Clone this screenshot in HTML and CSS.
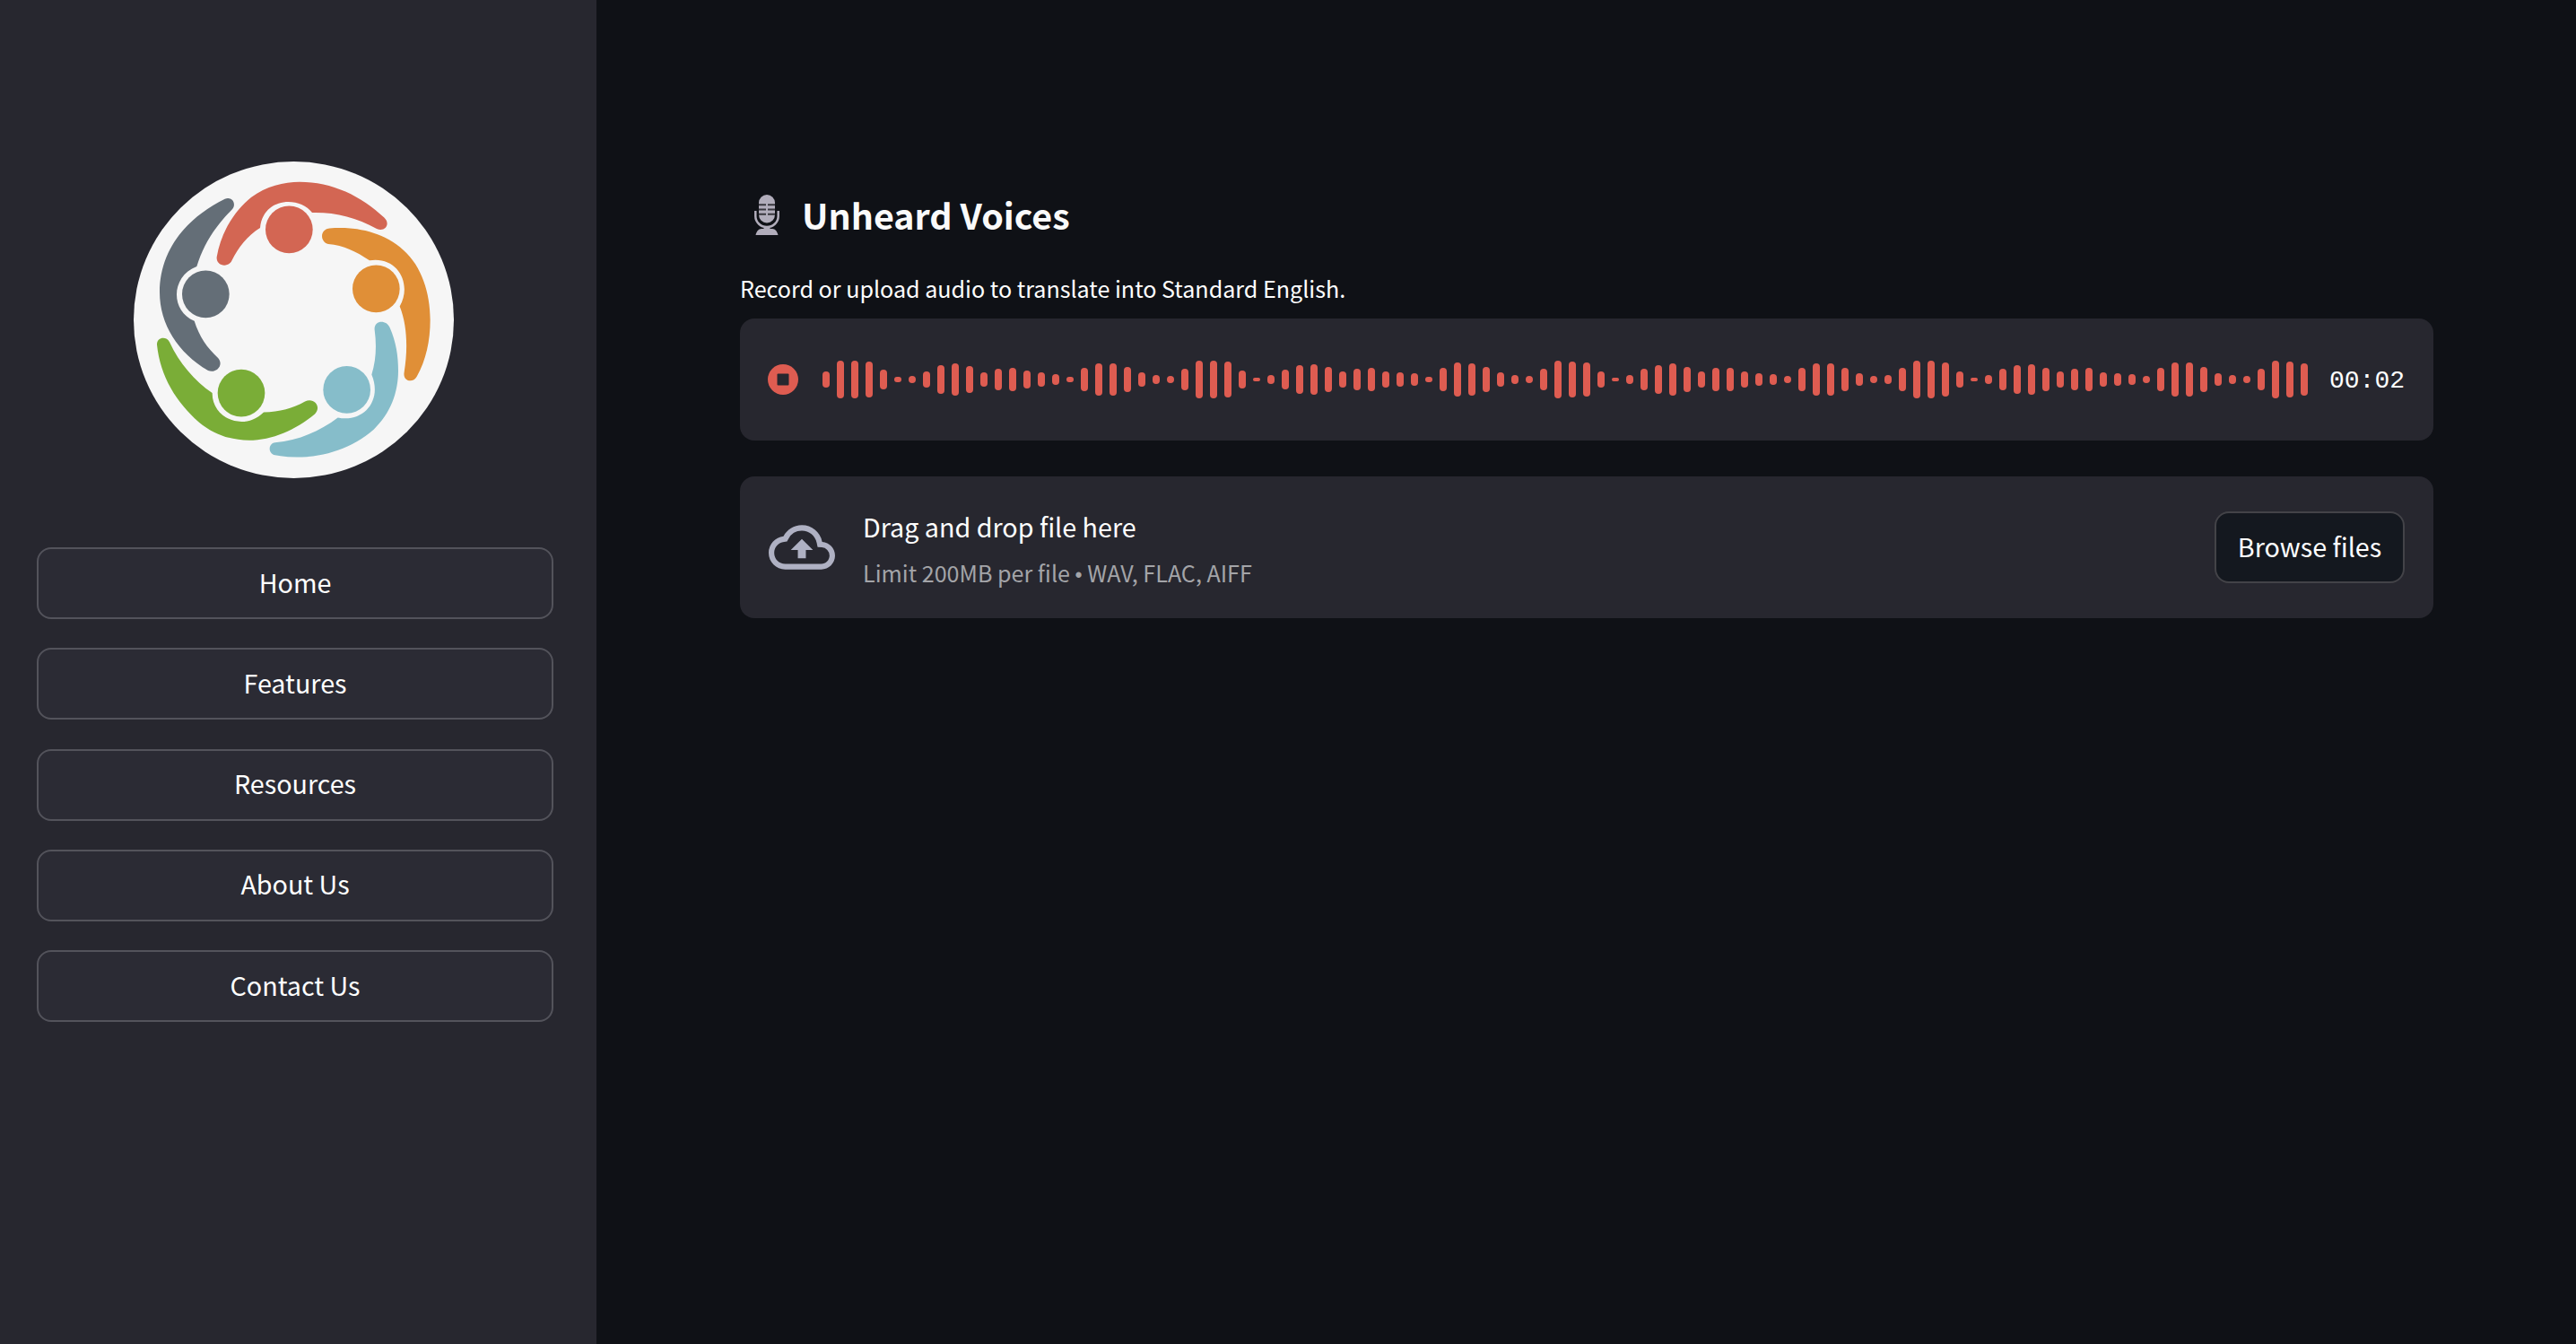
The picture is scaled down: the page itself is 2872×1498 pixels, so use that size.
FILE: index.html
```
<!DOCTYPE html>
<html lang="en">
<head>
    <meta charset="UTF-8">
    <meta name="viewport" content="width=device-width, initial-scale=1.0">
    <title>Unheard Voices</title>
    <link rel="stylesheet" href="styles.css">
</head>
<body>
    <aside class="sidebar">
        <svg class="logo" viewBox="57 60 1071 1060" preserveAspectRatio="none">
            <ellipse cx="592.5" cy="590" rx="535.5" ry="530" fill="#f6f6f6"/>
            <!-- red -->
            <path fill="#d36653" d="M335 380C350 290 400 220 450 180C500 142 560 128 612 128C720 128 820 175 895 248C918 270 897 297 870 285C800 246 730 229 654 231C610 175 490 180 480 282C437 309 406 350 386 390C374 418 332 410 335 380Z"/>
            <circle cx="577" cy="288" r="79" fill="#d36653"/>
            <!-- orange -->
            <path fill="#e08f37" d="M712 284C800 277 890 295 960 357C1020 410 1049 500 1049 590C1049 660 1035 725 1004 780C991 804 956 795 962 765C974 690 973 610 947 545C990 470 940 376 846 391C800 360 760 341 708 336C679 329 680 287 712 284Z"/>
            <circle cx="868" cy="486" r="79" fill="#e08f37"/>
            <!-- light blue -->
            <path fill="#86bdca" d="M863 624C859 591 902 587 914 616C935 665 942 710 942 760C942 835 915 905 860 957C770 1034 650 1064 530 1043C505 1037 507 1004 530 1001C610 993 680 962 740 917C825 935 890 860 853 773C868 725 870 675 863 624Z"/>
            <circle cx="770" cy="824" r="79" fill="#86bdca"/>
            <!-- green -->
            <path fill="#7aad37" d="M135 673C134 647 167 643 177 664C210 735 260 793 320 835C319 920 425 965 492 899C545 898 590 886 630 863C660 848 687 880 663 905C600 958 520 993 443 993C380 993 325 973 275 932C200 865 146 780 135 673Z"/>
            <circle cx="417" cy="835" r="79" fill="#7aad37"/>
            <!-- grey -->
            <path fill="#646e77" d="M362 185C388 176 402 203 386 221C330 277 292 335 268 411C180 445 180 560 260 594C276 645 303 685 340 718C359 741 335 770 306 760C205 700 144 605 144 497C144 360 230 250 362 185Z"/>
            <circle cx="298" cy="504" r="79" fill="#646e77"/>
        </svg>

        <nav class="menu">
            <button class="menu-btn">Home</button>
            <button class="menu-btn">Features</button>
            <button class="menu-btn">Resources</button>
            <button class="menu-btn">About Us</button>
            <button class="menu-btn">Contact Us</button>
        </nav>
    </aside>

    <main class="content">
        <h1 class="title">
            <svg class="mic" viewBox="0 0 28 46">
                <path fill="#b1adbb" d="M5 9a9 9 0 0 1 18 0v13.500a9 9 0 0 1-18 0z"/>
                <path d="M5 11.300h8M15 11.300h8M5 16.500h8M15 16.500h8M5 21.700h8M15 21.700h8" stroke="#38373e" stroke-width="2"/>
                <path d="M1.300 18v6a12.700 12 0 0 0 25.400 0v-6" fill="none" stroke="#b1adbb" stroke-width="2.500"/>
                <path fill="#b1adbb" d="M10.500 36h7v2H20c3.500 0 5.500 3 6.500 7h-25c1-4 3-7 6.500-7h2.500z"/>
            </svg>
            <span class="title-text">Unheard Voices</span>
        </h1>
        <p class="subtitle">Record or upload audio to translate into Standard English.</p>

        <section class="recorder">
            <svg class="stop" viewBox="0 0 34 34">
                <circle cx="17" cy="17" r="17" fill="#de5c51"/>
                <rect x="10.500" y="10.500" width="13" height="13" rx="1" fill="#27272f"/>
            </svg>
            <div class="wave" id="wave"></div>
            <span class="timer">00:02</span>
        </section>

        <section class="uploader">
            <svg class="cloud" viewBox="0 0 24 24">
                <path d="M19.350 10.040A7.490 7.490 0 0 0 12 4C9.110 4 6.600 5.640 5.350 8.040A5.994 5.994 0 0 0 0 14c0 3.310 2.690 6 6 6h13c2.760 0 5-2.240 5-5 0-2.640-2.050-4.780-4.650-4.960zM19 18H6c-2.210 0-4-1.790-4-4 0-2.050 1.530-3.760 3.560-3.970l1.070-.11.5-.95A5.469 5.469 0 0 1 12 6c2.620 0 4.880 1.860 5.390 4.430l.3 1.500 1.530.11A2.980 2.980 0 0 1 22 15c0 1.650-1.350 3-3 3zM8 13h2.550v3h2.900v-3H16l-4-4z"/>
            </svg>
            <div class="hint">
                <span class="hint-main">Drag and drop file here</span>
                <span class="hint-limit">Limit 200MB per file <span class="dot">•</span> WAV, FLAC, AIFF</span>
            </div>
            <button class="browse">Browse files</button>
        </section>
    </main>

    <script>
        const levels = [
            18, 42, 42, 40, 22, 6, 8, 18, 32, 36, 30, 16, 24, 26, 20, 16, 12, 6, 26, 36, 36, 28, 16, 10, 8,
            24, 42, 42, 40, 20, 4, 10, 22, 32, 34, 28, 18, 24, 26, 18, 16, 14, 6, 26, 38, 36, 28, 16, 10, 8,
            24, 42, 40, 38, 18, 4, 10, 24, 32, 36, 28, 18, 26, 26, 18, 14, 12, 8, 26, 36, 36, 26, 14, 8, 10,
            26, 42, 42, 38, 18, 4, 10, 24, 32, 34, 26, 18, 24, 26, 16, 14, 12, 8, 26, 38, 38, 28, 14, 10, 8,
            24, 42, 40, 36
        ];
        const wave = document.getElementById('wave');

        levels.forEach((level) => {
            const bar = document.createElement('span');
            bar.className = 'bar';
            bar.style.height = level + 'px';
            wave.appendChild(bar);
        });
    </script>
</body>
</html>
```
FILE: styles.css
```
* {
    box-sizing: border-box;
}
body {
    margin: 0;
    min-height: 100vh;
    display: flex;
    background: #0f1116;
    color: #fafafa;
    font-family: "Noto Sans CJK SC", "Noto Sans", sans-serif;
}
button {
    font-family: inherit;
    color: #fff;
    cursor: pointer;
}
.sidebar {
    width: 665px;
    flex-shrink: 0;
    padding: 180px 48px 0 41px;
    background: #27272f;
}
.logo {
    display: block;
    width: 357px;
    height: 353px;
    margin-left: 108px;
}
.menu {
    display: flex;
    flex-direction: column;
    gap: 32.3px;
    margin-top: 77px;
}
.menu-btn {
    height: 80px;
    padding: 0 0 3px;
    background: #2b2b34;
    border: 2px solid #53535b;
    border-radius: 16px;
    font-size: 28.7px;
    line-height: 40px;
}
.content {
    flex: 1;
    padding: 210px 159px 0 160px;
}
.title {
    display: flex;
    align-items: center;
    gap: 25px;
    height: 60px;
    margin: 0;
    padding-left: 16px;
    font-size: 39.4px;
    font-weight: 700;
    line-height: 60px;
}
.title-text {
    padding-bottom: 3px;
}
.mic {
    width: 28px;
    height: 46px;
}
.subtitle {
    height: 45px;
    margin: 29px 0 11px;
    color: #fff;
    font-size: 25.1px;
    line-height: 45px;
}
.recorder {
    display: flex;
    align-items: center;
    height: 136px;
    padding: 0 32px 0 31px;
    background: #27272f;
    border-radius: 16px;
}
.stop {
    width: 34px;
    height: 34px;
    margin-right: 27px;
}
.wave {
    display: flex;
    align-items: center;
    gap: 8px;
}
.bar {
    width: 8px;
    background: #de5c51;
    border-radius: 4px;
}
.timer {
    margin-left: auto;
    padding-top: 2px;
    color: #fff;
    font-family: "Liberation Mono", monospace;
    font-size: 28px;
}
.uploader {
    display: flex;
    align-items: center;
    height: 158px;
    margin-top: 40px;
    padding: 0 32px;
    background: #27272f;
    border-radius: 16px;
}
.cloud {
    width: 74px;
    height: 74px;
    fill: #afb1c3;
}
.hint {
    display: flex;
    flex-direction: column;
    margin-left: 31px;
    padding-top: 4px;
}
.hint-main {
    color: #fff;
    font-size: 28.7px;
    line-height: 52px;
}
.hint-limit {
    color: #a3a4a8;
    font-size: 25.1px;
    line-height: 50px;
}
.dot {
    font-family: "Liberation Sans", sans-serif;
    font-size: 23px;
    line-height: 1;
}
.browse {
    width: 212px;
    height: 80px;
    margin-left: auto;
    padding: 0 0 4px;
    background: #14181f;
    border: 2px solid #434348;
    border-radius: 16px;
    font-size: 28.7px;
}
```
